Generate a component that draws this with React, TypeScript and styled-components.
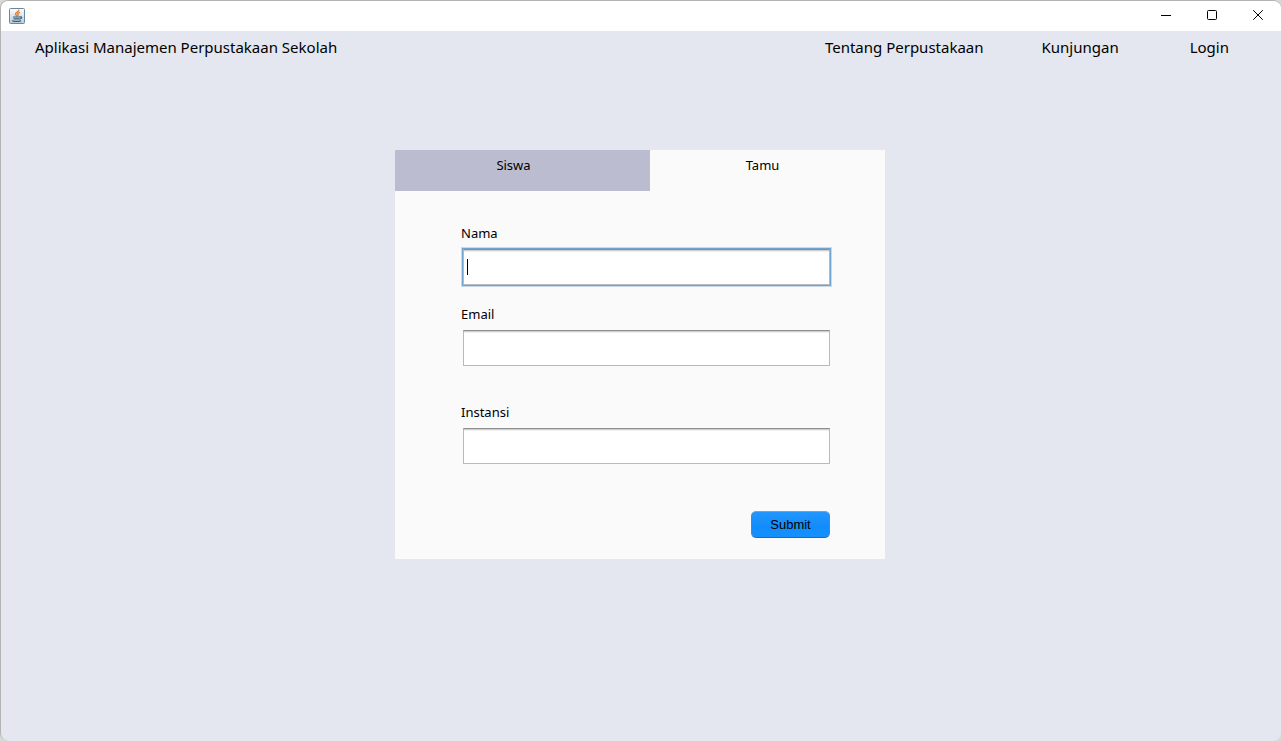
import React, { useState } from "react";
import styled, { createGlobalStyle } from "styled-components";

const GlobalStyle = createGlobalStyle`
  *, *::before, *::after { box-sizing: border-box; }
  body { margin: 0; background: #d9d9d9; }
`;

const Window = styled.div`
  display: flex;
  flex-direction: column;
  min-height: 100vh;
  overflow: hidden;
  border-top: 1px solid #b4b4b4;
  border-left: 1px solid #b4b4b4;
  border-radius: 8px;
  background: #e4e7ef;
  color: #000;
  font-family: "Noto Sans", "Liberation Sans", sans-serif;
`;

const TitleBar = styled.header`
  display: flex;
  align-items: center;
  justify-content: space-between;
  height: 30px;
  padding-left: 8px;
  background: #fff;
`;

const AppIcon = styled.svg`
  display: block;
  width: 16px;
  height: 16px;
`;

const WindowControls = styled.div`
  display: flex;
`;

const WindowButton = styled.button`
  display: flex;
  align-items: center;
  justify-content: center;
  width: 46px;
  height: 26px;
  margin-bottom: 2px;
  padding: 0;
  border: 0;
  background: transparent;
`;

const NavBar = styled.nav`
  display: flex;
  align-items: center;
  justify-content: space-between;
  height: 32px;
  padding: 0 52px 0 34px;
  font-size: 15px;
  line-height: 20px;
`;

const NavLinks = styled.div`
  display: flex;
`;

const NavLink = styled.a<{ $gap?: number }>`
  margin-left: ${({ $gap = 0 }) => $gap}px;
  color: inherit;
  text-decoration: none;
`;

const Content = styled.main`
  display: flex;
  justify-content: center;
  padding: 87px 2px 0 0;
`;

const Card = styled.section`
  width: 490px;
  padding-bottom: 21px;
  background: #fafafa;
`;

const Tabs = styled.div`
  display: flex;
`;

const Tab = styled.button<{ $width: number; $inset: number; $active: boolean }>`
  display: flex;
  justify-content: center;
  width: ${({ $width }) => $width}px;
  height: 41px;
  padding: 5px ${({ $inset }) => $inset}px 0 0;
  border: 0;
  background: ${({ $active }) => ($active ? "#fafafa" : "#bbbccf")};
  color: #000;
  font: 13px/20px "Noto Sans", "Liberation Sans", sans-serif;
`;

const Form = styled.form`
  display: flex;
  flex-direction: column;
  padding: 32px 55px 0 66px;
`;

const Field = styled.div<{ $gap: number }>`
  display: flex;
  flex-direction: column;
  gap: 6px;
  margin-bottom: ${({ $gap }) => $gap}px;
`;

const Label = styled.label`
  font-size: 13px;
  line-height: 20px;
`;

const TextInput = styled.input<{ $active?: boolean }>`
  height: 36px;
  margin-left: 2px;
  padding: 0 4px;
  border: 1px solid #b9b9b9;
  border-top-color: #8d8d8d;
  border-radius: 0;
  outline: none;
  background: ${({ $active }) =>
    $active
      ? "linear-gradient(#000, #000) 3px 9px / 1px 16px no-repeat #fff"
      : "#fff"};
  box-shadow: inset 0 1px 0 #d0d0d0, inset 0 2px 0 #f0f0f0
    ${({ $active }) => ($active ? ", 0 0 0 1px #73a4d1, 0 0 0 2px #c5daee" : "")};
  caret-color: transparent;
  font: 13px "Noto Sans", sans-serif;
`;

const SubmitButton = styled.button`
  align-self: flex-end;
  width: 79px;
  height: 27px;
  padding: 0;
  border: 1px solid #5f84a8;
  border-top-color: #6fa3d4;
  border-bottom-color: #3f5f85;
  border-radius: 5px;
  background: linear-gradient(#2196ff, #128cfb 60%, #1690ff);
  color: #000;
  font: 13px/16px "Liberation Sans", sans-serif;
`;

function JavaIcon() {
  return (
    <AppIcon viewBox="0 0 16 16" aria-hidden="true">
      <defs>
        <linearGradient id="tile" x1="0" y1="0" x2="0" y2="1">
          <stop offset="0" stopColor="#fdfdfe" />
          <stop offset="1" stopColor="#b9cad6" />
        </linearGradient>
      </defs>
      <rect x="0.5" y="0.5" width="15" height="15" rx="1" fill="url(#tile)" stroke="#6c879c" />
      <g fill="none" strokeLinecap="round">
        <path d="M9.8 2.2C10 4 6.2 4.4 6.5 6.2C6.6 7 7.6 7.2 7.8 8M10.4 4.6C8.6 5.3 8.4 6.1 9.2 7.2" stroke="#e87f2c" strokeWidth="1.5" />
        <path d="M4.4 9H10.6M5 10.8H10M3.6 12.8Q7.5 13.9 11.6 12.8M11.2 8.8C13.6 8.7 12.8 10.6 11 11" stroke="#2f5f82" strokeWidth="1.2" />
      </g>
    </AppIcon>
  );
}

export default function App() {
  const [tab, setTab] = useState("tamu");

  return (
    <>
      <GlobalStyle />
      <Window>
        <TitleBar>
          <JavaIcon />
          <WindowControls>
            <WindowButton type="button" aria-label="Minimize">
              <svg width="10" height="10" viewBox="0 0 10 10" shapeRendering="crispEdges">
                <path d="M0 5.5H10" stroke="#000" />
              </svg>
            </WindowButton>
            <WindowButton type="button" aria-label="Maximize">
              <svg width="10" height="10" viewBox="0 0 10 10" fill="none">
                <rect x="0.5" y="0.5" width="9" height="9" rx="1" stroke="#000" />
              </svg>
            </WindowButton>
            <WindowButton type="button" aria-label="Close">
              <svg width="10" height="10" viewBox="0 0 10 10">
                <path d="M0.2 0.2L9.8 9.8M9.8 0.2L0.2 9.8" stroke="#000" />
              </svg>
            </WindowButton>
          </WindowControls>
        </TitleBar>
        <NavBar>
          <span>Aplikasi Manajemen Perpustakaan Sekolah</span>
          <NavLinks>
            <NavLink href="#tentang">Tentang Perpustakaan</NavLink>
            <NavLink href="#kunjungan" $gap={58}>Kunjungan</NavLink>
            <NavLink href="#login" $gap={71}>Login</NavLink>
          </NavLinks>
        </NavBar>
        <Content>
          <Card>
            <Tabs role="tablist">
              <Tab type="button" role="tab" aria-selected={tab === "siswa"} $width={255} $inset={18} $active={tab === "siswa"} onClick={() => setTab("siswa")}>
                Siswa
              </Tab>
              <Tab type="button" role="tab" aria-selected={tab === "tamu"} $width={235} $inset={10} $active={tab === "tamu"} onClick={() => setTab("tamu")}>
                Tamu
              </Tab>
            </Tabs>
            <Form onSubmit={(event) => event.preventDefault()}>
              <Field $gap={19}>
                <Label htmlFor="nama">Nama</Label>
                <TextInput id="nama" type="text" $active />
              </Field>
              <Field $gap={36}>
                <Label htmlFor="email">Email</Label>
                <TextInput id="email" type="email" />
              </Field>
              <Field $gap={47}>
                <Label htmlFor="instansi">Instansi</Label>
                <TextInput id="instansi" type="text" />
              </Field>
              <SubmitButton type="submit">Submit</SubmitButton>
            </Form>
          </Card>
        </Content>
      </Window>
    </>
  );
}
